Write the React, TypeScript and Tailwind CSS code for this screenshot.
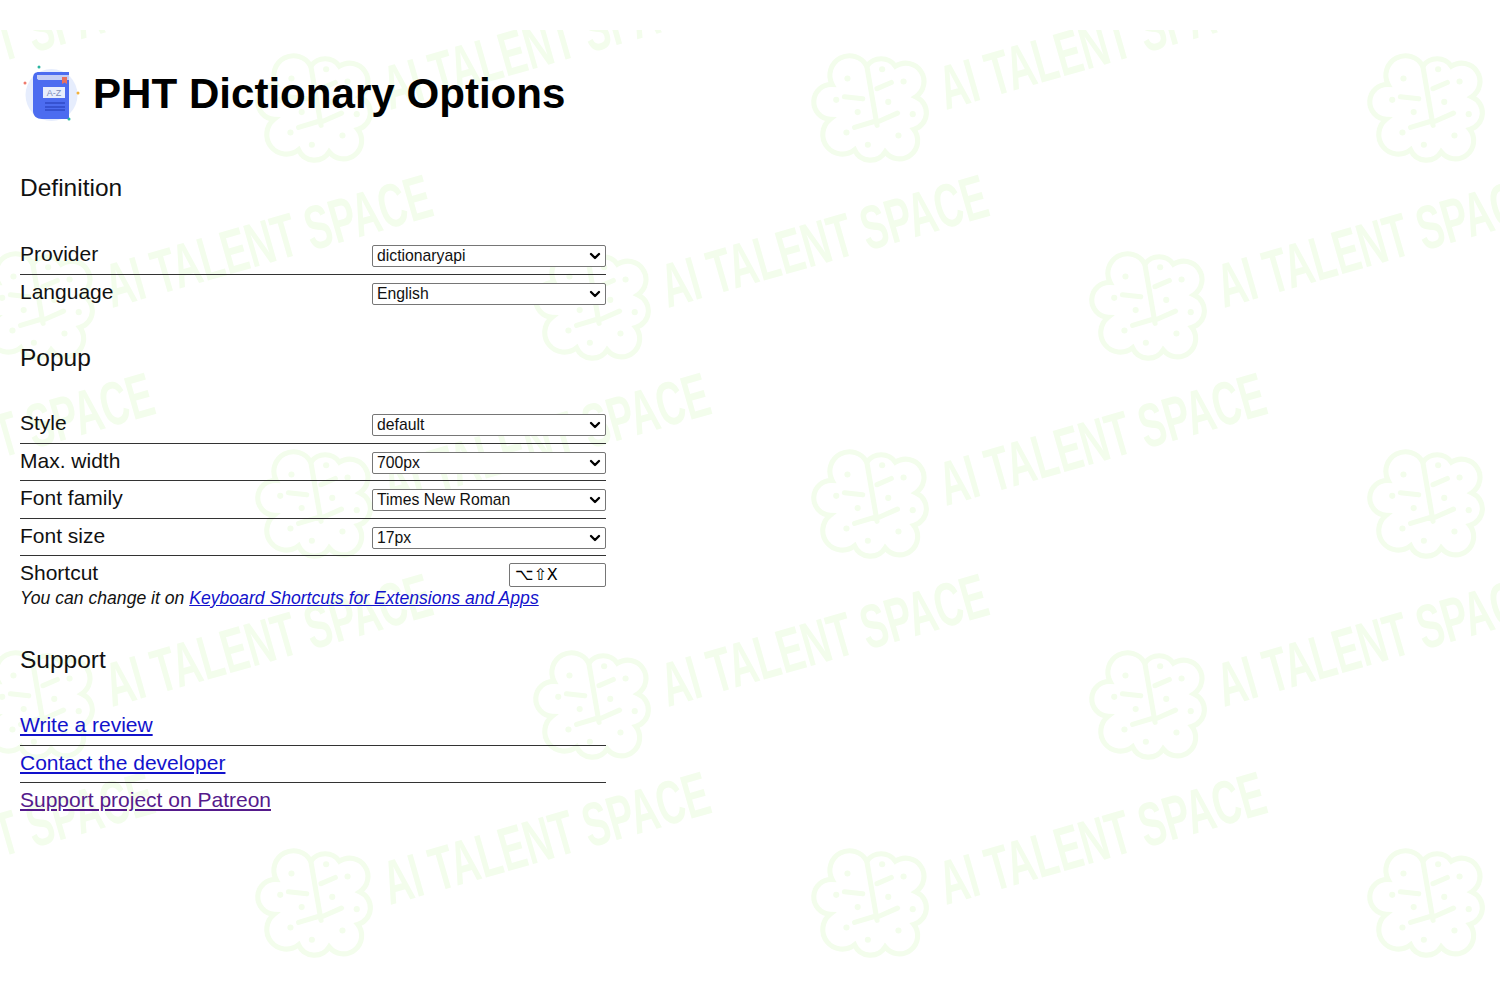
import { ChevronDown } from "lucide-react";

const sans = "font-['Liberation_Sans',Arial,sans-serif]";

// brain + slogan, repeated over the page
const marks: [number, number][] = [
  [315, 108], [871, 108], [1427, 108], [-241, 108],
  [37, 306], [593, 306], [1149, 306],
  [315, 504], [871, 504], [1427, 504], [-241, 504],
  [37, 705], [593, 705], [1149, 705],
  [315, 903], [871, 903], [1427, 903], [-241, 903],
];

const dots: [number, number][] = [
  [-27, -28], [7, -37], [28, -25], [37, 7], [23, 28], [-7, 37], [-28, 25], [-38, -7], [-17, 5], [13, -5],
];

function Mark({ x, y }: { x: number; y: number }) {
  return (
    <g transform={`translate(${x} ${y})`}>
      <g transform="translate(4 -1) scale(1.02)">
        <g fill="none" stroke="#f3fdec" strokeWidth="5" strokeLinecap="round">
          <path d="M-8 -40A17 17 0 0 1 20 -40A17 17 0 0 1 40 -10A17 17 0 0 1 38 22A17 17 0 0 1 10 44A17 17 0 0 1 -20 42A17 17 0 0 1 -44 12A17 17 0 0 1 -42 -22A17 17 0 0 1 -8 -40z" />
          <path d="M-8 -40L2 18M-30 -10l18 2M2 -18l14-6M4 14l18-8M-20 20l20-6" />
        </g>
        {dots.map(([cx, cy], i) => (
          <circle key={i} cx={cx} cy={cy} r="3" fill="#f3fdec" />
        ))}
      </g>
      <text
        x="75"
        y="2"
        transform="rotate(-16 75 2)"
        textLength="337"
        lengthAdjust="spacingAndGlyphs"
        fontFamily="'Liberation Sans', Arial, sans-serif"
        fontWeight="700"
        fontSize="62"
        fill="#f3fdec"
      >
        AI TALENT SPACE
      </text>
    </g>
  );
}

function Watermark() {
  return (
    <svg className="absolute left-0 top-[30px] pointer-events-none" width="1500" height="970" viewBox="0 30 1500 970">
      {marks.map(([x, y]) => (
        <Mark key={`${x}-${y}`} x={x} y={y} />
      ))}
    </svg>
  );
}

function BookLogo() {
  return (
    <svg width="64" height="64" viewBox="0 0 64 64" className="shrink-0">
      <circle cx="31.500" cy="33" r="26" fill="#e6edfd" />
      <path d="M13 16c0-4 2-6 6-6h30v3H20c-2 0-3 1-3 2.500s1 2.500 3 2.500h29v39H22c-5 0-9-3-9-8z" fill="#4c6cf0" />
      <path d="M17 13h32v5H20c-2 0-3-1-3-2.500z" fill="#c4cef5" />
      <path d="M42 15h5v7l-2.500-1.500L42 22z" fill="#e8705f" />
      <rect x="23" y="25" width="22" height="11" fill="#e8eefc" />
      <text x="34" y="34" textAnchor="middle" fontFamily="'Liberation Sans', Arial, sans-serif" fontSize="9" fill="#7d8db8">A-Z</text>
      <path d="M25 41h20M25 45h20M25 48h20" stroke="#2f49c6" strokeWidth="1.500" />
      <circle cx="19" cy="5" r="1.500" fill="#2bb5a0" />
      <circle cx="5" cy="21" r="1.500" fill="#ef7a6d" />
      <circle cx="58" cy="31" r="1.500" fill="#f2b13c" />
      <circle cx="49" cy="57" r="1.500" fill="#2bb5a0" />
    </svg>
  );
}

function Select({ value }: { value: string }) {
  return (
    <div className="relative w-[234px]">
      <select
        defaultValue={value}
        className={`${sans} block h-[22px] w-full appearance-none rounded-[2px] border border-[#767676] bg-white pl-[4px] text-[15.750px] leading-[20px] text-[#111]`}
      >
        <option>{value}</option>
      </select>
      <ChevronDown className="pointer-events-none absolute right-[3px] top-[3px] h-4 w-4 text-black" strokeWidth={3.5} />
    </div>
  );
}

function Row({ label, value, last }: { label: string; value: string; last?: boolean }) {
  return (
    <div className={`flex h-[37.500px] items-start justify-between pt-[2px] ${last ? "" : "border-b border-[#333]"}`}>
      <span className="text-[21px] leading-[30px]">{label}</span>
      <div className="pt-[6px]">
        <Select value={value} />
      </div>
    </div>
  );
}

function Heading({ children }: { children: string }) {
  return <h2 className="h-[37px] text-[24.500px] leading-[30px]">{children}</h2>;
}

function LinkRow({ children, visited, last }: { children: string; visited?: boolean; last?: boolean }) {
  return (
    <div className={`h-[37.500px] pt-[2px] ${last ? "" : "border-b border-[#333]"}`}>
      <a href="#" className={`text-[21px] leading-[30px] underline ${visited ? "text-[#551a8b]" : "text-[#1212cc]"}`}>
        {children}
      </a>
    </div>
  );
}

export default function App() {
  return (
    <div className={`${sans} relative min-h-[1000px] overflow-hidden bg-white text-[#111]`}>
      <Watermark />
      <div className="relative w-[606px] pl-5">
        <header className="flex h-[173px] items-start gap-[9px] pt-[62px]">
          <BookLogo />
          <h1 className="pt-[2px] text-[42.100px] font-bold leading-[60px] text-black">PHT Dictionary Options</h1>
        </header>

        <Heading>Definition</Heading>
        <div className="mt-[27px]">
          <Row label="Provider" value="dictionaryapi" />
          <Row label="Language" value="English" last />
        </div>

        <div className="mt-[31px]">
          <Heading>Popup</Heading>
        </div>
        <div className="mt-[26px]">
          <Row label="Style" value="default" />
          <Row label="Max. width" value="700px" />
          <Row label="Font family" value="Times New Roman" />
          <Row label="Font size" value="17px" />
          <div className="flex h-[31px] items-start justify-between pt-[2px]">
            <span className="text-[21px] leading-[30px]">Shortcut</span>
            <input
              readOnly
              value="⌥⇧X"
              className="mt-[5px] h-6 w-[97px] rounded-[2px] border border-[#767676] bg-white pl-[5px] font-['DejaVu_Sans',sans-serif] text-[16px] text-black"
            />
          </div>
          <p className="text-[17.600px] italic leading-[22px]">
            You can change it on{" "}
            <a href="#" className="text-[#1212cc] underline">
              Keyboard Shortcuts for Extensions and Apps
            </a>
          </p>
        </div>

        <div className="mt-[36px]">
          <Heading>Support</Heading>
        </div>
        <div className="mt-[26px]">
          <LinkRow>Write a review</LinkRow>
          <LinkRow>Contact the developer</LinkRow>
          <LinkRow visited last>Support project on Patreon</LinkRow>
        </div>
      </div>
    </div>
  );
}
